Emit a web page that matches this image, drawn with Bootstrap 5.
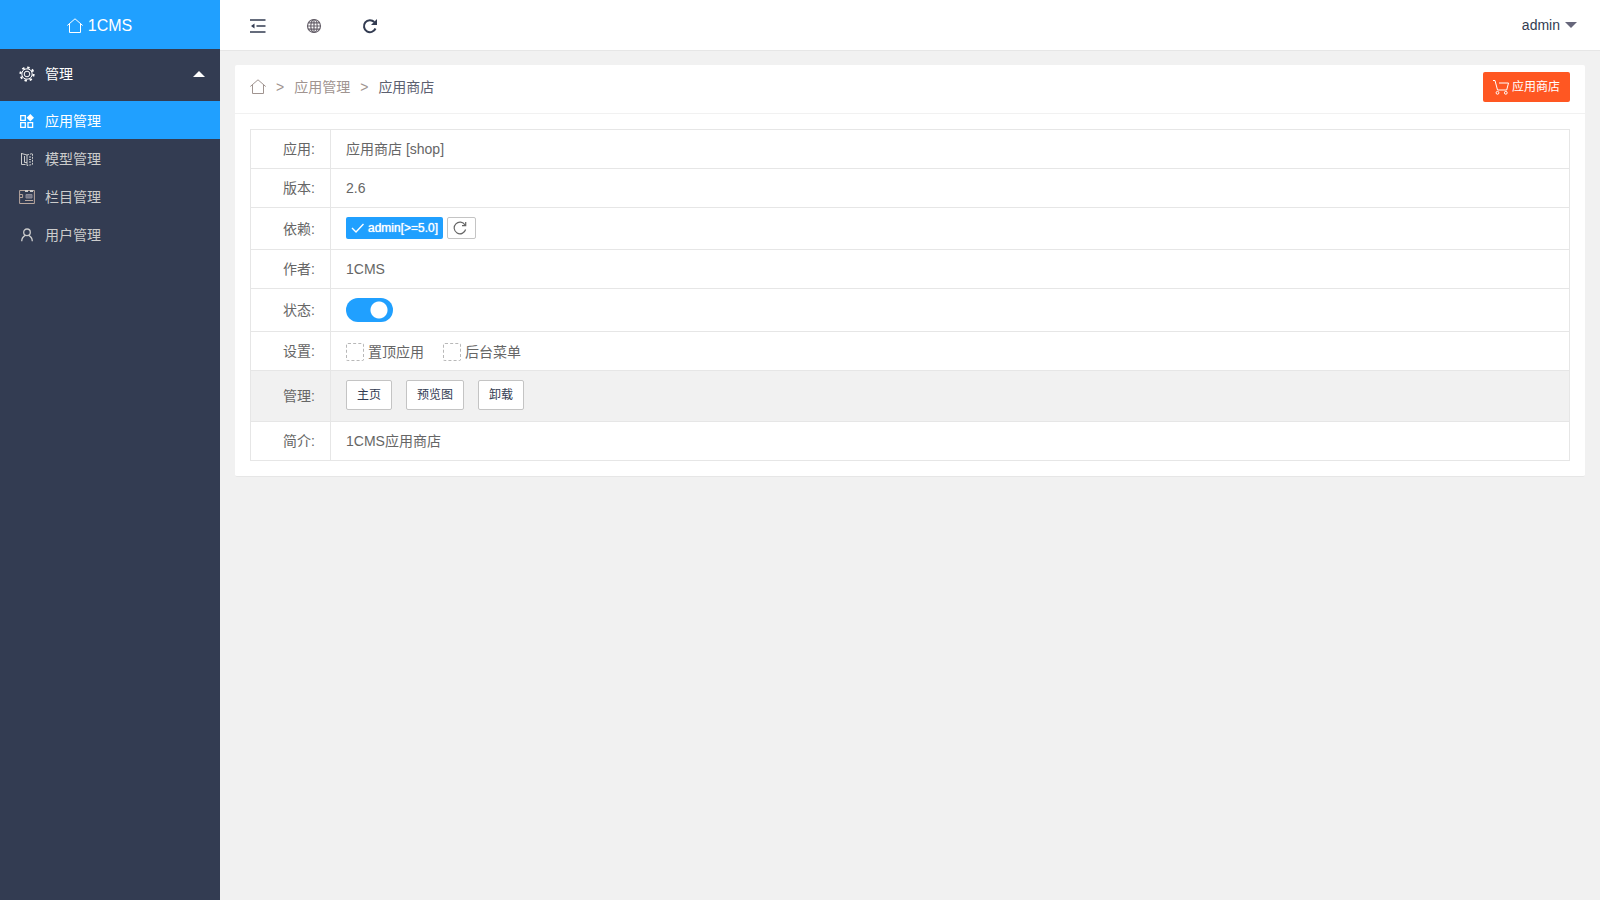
<!DOCTYPE html>
<html lang="zh-CN">
<head>
<meta charset="utf-8">
<meta name="viewport" content="width=device-width, initial-scale=1">
<title>应用商店 - 1CMS</title>
<link href="https://cdn.jsdelivr.net/npm/bootstrap@5.3.0/dist/css/bootstrap.min.css" rel="stylesheet">
<style>
  :root { --blue: #20a0ff; --navy: #333c52; --line: #e6e6e6; }
  body { background: #f1f1f1; color: #666; font: 14px/20px "Liberation Sans", "Noto Sans CJK SC", sans-serif; }
  a { text-decoration: none; color: inherit; }
  svg { display: block; flex: none; }
  .stroke-icon { fill: none; stroke: currentColor; }

  .side { width: 220px; background: var(--navy); color: #ccc; }
  .brand { height: 49px; background: var(--blue); color: #fff; font-size: 16px; gap: 5px; padding: 2px 21px 0 0; }
  .group-btn { height: 52px; color: #fff; background: none; border: 0; padding: 0 15px 2px 19px; gap: 10px; }
  .side .nav-link { height: 38px; color: #ccc; padding: 2px 19px 0; gap: 10px; border-radius: 0; }
  .side .nav-link.active { background: var(--blue); color: #fff; }
  .tri { width: 0; height: 0; border: 6px solid transparent; }
  .tri-up { border-bottom-color: #fff; border-top-width: 0; }
  .tri-down { border-top-color: #66667a; border-bottom-width: 0; }

  .topbar { height: 51px; border-bottom: 1px solid var(--line); color: var(--navy); padding: 0 23px 0 30px; }
  .tools { gap: 40px; padding-top: 2px; }
  .tools button, .user-btn { background: none; border: 0; padding: 0; color: inherit; }
  .user-btn { gap: 5px; }

  .panel { background: #fff; margin: 14px 15px; border-radius: 2px; border-bottom: 1px solid var(--line); }
  .panel-head { height: 49px; padding: 0 15px; border-bottom: 1px solid #f1f1f1; }
  .crumbs { color: #a09490; gap: 10px; padding-bottom: 5px; }
  .crumbs .here { color: #5c6070; }
  .shop-btn { height: 30px; padding: 0 10px; gap: 3px; border: 0; border-radius: 2px; background: #ff5722; color: #fff; font-size: 12px; margin-bottom: 4px; }
  .shop-btn:hover { background: #ff5722; color: #fff; }

  .panel-main { padding: 15px; }
  .info { border-collapse: separate; border-spacing: 0; width: 100%; border: solid var(--line); border-width: 1px 0 0 1px; }
  .info th, .info td { border: solid var(--line); border-width: 0 1px 1px 0; padding: 9px 15px; font-weight: 400; }
  .info th { width: 80px; text-align: right; white-space: nowrap; }
  .info .shade { background: #f1f1f1; }
  .dep-row { height: 23px; gap: 4px; }
  .dep { height: 22px; padding: 0 5px; gap: 4px; border-radius: 2px; border: 0; background: var(--blue); color: #fff; font-size: 12px; text-shadow: 0 0 1px #fff; }
  .line-btn { background: #fff; border: 1px solid #c4c4c4; border-radius: 2px; color: var(--navy); font-size: 12px; }
  .mini { width: 29px; height: 22px; padding: 0 5px; color: #666; }
  .ops { gap: 14px; height: 32px; }
  .ops .line-btn { height: 30px; padding: 0 10px; }
  .form-check-input.toggle { width: 47px; height: 24px; margin: 0; border: 0; border-radius: 12px; float: none; display: block; box-shadow: none;
    background: radial-gradient(circle at 33px 12px, #fff 8px, var(--blue) 9px); }
  .form-check-input.tick { width: 18px; height: 18px; margin: 0; border: 1px dashed #b8b8b8; border-radius: 2px; box-shadow: none; }
  .opts { height: 20px; gap: 19px; }
  .opts label { gap: 4px; line-height: 18px; }
</style>
</head>
<body>
<svg width="0" height="0" class="position-absolute" aria-hidden="true">
  <symbol id="home" viewBox="0 0 16 16"><path d="M.3 7.500 8 .8l7.700 6.700M2.500 5.800v8.700h11V5.800"/></symbol>
</svg>
<div class="d-flex min-vh-100">
  <aside class="side flex-shrink-0">
    <a href="#" class="brand d-flex align-items-center justify-content-center">
      <svg class="stroke-icon" width="16" height="16"><use href="#home"/></svg>1CMS
    </a>
    <button type="button" class="group-btn d-flex align-items-center w-100">
      <svg class="stroke-icon" width="16" height="16" viewBox="0 0 16 16" stroke="#e6dcd6"><circle cx="8" cy="8" r="2.800"/><circle cx="8" cy="8" r="5.200"/><circle cx="8" cy="8" r="6.600" stroke-width="2" stroke-dasharray="2.400 2.784"/></svg>
      <span>管理</span><span class="tri tri-up ms-auto"></span>
    </button>
    <nav class="nav flex-column">
      <a href="#" class="nav-link active d-flex align-items-center">
        <svg class="stroke-icon" width="16" height="16" viewBox="0 0 16 16" stroke-width="1.300"><path d="M1.700 2.700h4.600v4.600H1.700zM1.700 9.700h4.600v4.600H1.700zM9 9.700h4.600v4.600H9z"/><path d="m11.300 1 3.700 3.700-3.700 3.700-3.700-3.700z" fill="currentColor" stroke="none"/></svg>应用管理</a>
      <a href="#" class="nav-link d-flex align-items-center">
        <svg class="stroke-icon" width="16" height="16" viewBox="0 0 16 16" stroke="#b5aaa6"><path d="M2.500 2v11.500h4M2.500 2.500 8 4v10.500M5.500 5v6.500H8"/><path d="m8 4 5.500-1.500v11L8 14.500M10 6h2M10 8.500h2M10 11h2" stroke-dasharray="2 1"/></svg>模型管理</a>
      <a href="#" class="nav-link d-flex align-items-center">
        <svg class="stroke-icon" width="16" height="16" viewBox="0 0 16 16"><path d="M.6 1.500h14.800v13H.6zM.6 5.500h3v3h-3M6 11.500h8" stroke="#b9a79e"/><path d="M6 2h3M11 2h3" stroke-width="2"/><path d="M7 5.500h6v3.500H7z" fill="#77788a" stroke="#8b8a96"/></svg>栏目管理</a>
      <a href="#" class="nav-link d-flex align-items-center">
        <svg class="stroke-icon" width="16" height="16" viewBox="0 0 16 16" stroke-width="1.300"><circle cx="8" cy="5.300" r="3.300"/><path d="M2.700 14.300c.1-2.800 1.400-4.800 3.500-5.900M13.300 14.300c-.1-2.800-1.400-4.800-3.500-5.900"/></svg>用户管理</a>
    </nav>
  </aside>

  <div class="flex-grow-1">
    <header class="topbar bg-white d-flex align-items-center justify-content-between">
      <div class="tools d-flex align-items-center">
        <button type="button" aria-label="收起菜单"><svg class="stroke-icon" width="16" height="16" viewBox="0 0 16 16" stroke-width="1.600"><path d="M0 2h15.500M6.500 8h9M0 14h15.500"/><path d="M1 8l3.500-2.500v5z" fill="currentColor" stroke="none"/></svg></button>
        <button type="button" aria-label="网站首页"><svg class="stroke-icon" width="16" height="16" viewBox="0 0 16 16" color="#66606a" stroke-width="1.200"><circle cx="8" cy="8" r="6.500"/><ellipse cx="8" cy="8" rx="3.200" ry="6.500"/><path d="M8 1.500v13M1.500 8h13M2.500 4.800h11M2.500 11.200h11"/></svg></button>
        <button type="button" aria-label="刷新"><svg class="stroke-icon" width="16" height="16" viewBox="0 0 16 16" stroke-width="2"><path d="M13.500 10.500A6 6 0 1 1 12.300 4"/><path d="M15 1v6H9z" fill="currentColor" stroke="none"/></svg></button>
      </div>
      <button type="button" class="user-btn d-flex align-items-center"><span>admin</span><span class="tri tri-down"></span></button>
    </header>

    <main class="panel">
      <div class="panel-head d-flex align-items-center justify-content-between">
        <nav class="crumbs d-flex align-items-center" aria-label="breadcrumb">
          <a href="#" aria-label="首页"><svg class="stroke-icon" width="16" height="16"><use href="#home"/></svg></a>
          <span>&gt;</span><a href="#">应用管理</a><span>&gt;</span><a href="#" class="here">应用商店</a>
        </nav>
        <button type="button" class="shop-btn btn d-flex align-items-center">
          <svg class="stroke-icon" width="16" height="16" viewBox="0 0 16 16"><path d="M0 1.500h2l2.500 9.500h9.200L15.500 4H6"/><circle cx="4.500" cy="13.800" r="1.400"/><circle cx="12.800" cy="13.800" r="1.400"/></svg>应用商店
        </button>
      </div>
      <div class="panel-main">
        <table class="info">
          <tr><th scope="row">应用:</th><td>应用商店 [shop]</td></tr>
          <tr><th scope="row">版本:</th><td>2.6</td></tr>
          <tr><th scope="row">依赖:</th><td><div class="dep-row d-flex align-items-start">
            <button type="button" class="dep d-flex align-items-center"><svg class="stroke-icon" width="13" height="12" viewBox="0 0 13 12" stroke-width="1.400"><path d="m1 6 4 4 7.500-8"/></svg>admin[&gt;=5.0]</button>
            <button type="button" class="line-btn mini" aria-label="刷新依赖"><svg class="stroke-icon" width="14" height="14" viewBox="0 0 14 14" stroke-width="1.200"><path d="M12.600 8.500A5.800 5.800 0 1 1 12 4M12.700 1v3.700H9"/></svg></button>
          </div></td></tr>
          <tr><th scope="row">作者:</th><td>1CMS</td></tr>
          <tr><th scope="row">状态:</th><td><input class="form-check-input toggle" type="checkbox" role="switch" aria-label="状态" checked></td></tr>
          <tr><th scope="row">设置:</th><td><div class="opts d-flex align-items-end">
            <label class="d-flex" for="top"><input class="form-check-input tick" id="top" type="checkbox">置顶应用</label>
            <label class="d-flex" for="menu"><input class="form-check-input tick" id="menu" type="checkbox">后台菜单</label>
          </div></td></tr>
          <tr class="shade"><th scope="row">管理:</th><td><div class="ops d-flex align-items-start">
            <button type="button" class="line-btn">主页</button><button type="button" class="line-btn">预览图</button><button type="button" class="line-btn">卸载</button>
          </div></td></tr>
          <tr><th scope="row">简介:</th><td>1CMS应用商店</td></tr>
        </table>
      </div>
    </main>
  </div>
</div>
<script src="https://cdn.jsdelivr.net/npm/bootstrap@5.3.0/dist/js/bootstrap.bundle.min.js"></script>
</body>
</html>
